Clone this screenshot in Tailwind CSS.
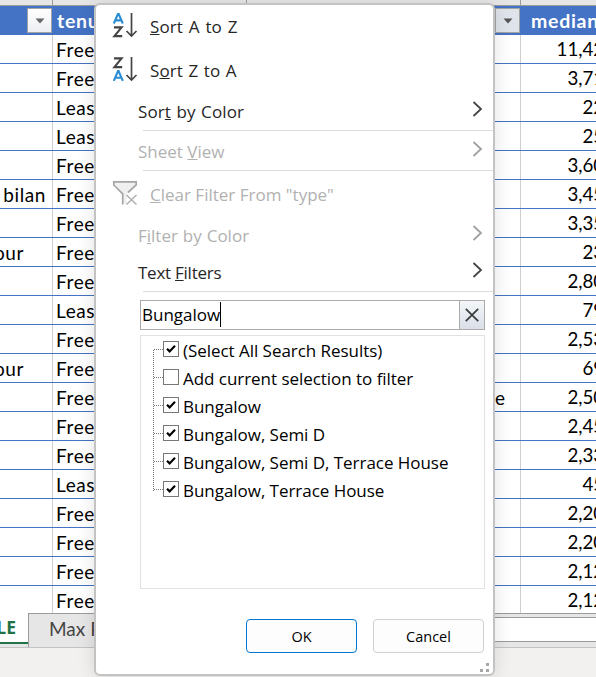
<!DOCTYPE html>
<html lang="en">
<head>
<meta charset="utf-8">
<title>Filter menu</title>
<script src="https://cdn.jsdelivr.net/npm/@tailwindcss/browser@4"></script>
</head>
<body class="w-[596px] h-[677px] overflow-hidden bg-[#f2f1f0]">
<div class="relative w-[596px] h-[677px] overflow-hidden flex flex-col font-['Lato',sans-serif] text-black">
  <!-- column heading strip -->
  <div class="h-[6px] shrink-0 flex bg-[#e6e6e6] border-b border-[#9b9b9b]">
    <div class="w-[53px] border-r border-[#9b9b9b]"></div>
    <div class="w-[194px] border-r border-[#9b9b9b]"></div>
    <div class="w-[274px] border-r border-[#9b9b9b]"></div>
  </div>
  <!-- table header -->
  <div class="h-[29px] shrink-0 flex items-center bg-[#4472c4] text-white font-bold text-[19.5px] tracking-[0.7px] whitespace-nowrap">
    <div class="w-[52px] shrink-0 flex justify-end"><div class="w-[25px] h-[25px] border border-[#a3a3a3] bg-linear-to-b from-white to-[#eceff3] flex items-center justify-center"><svg width="10" height="6"><path d="M0.5 0.5H9.5L5 5.5Z" fill="#666"/></svg></div></div>
    <div class="w-[443px] shrink-0 pl-[5px]">tenure</div>
    <div class="w-[25px] h-[25px] shrink-0 border border-[#a3a3a3] bg-[#dfe3ea] flex items-center justify-center"><svg width="10" height="6"><path d="M0.5 0.5H9.5L5 5.5Z" fill="#555"/></svg></div>
    <div class="pl-[11px]">median</div>
  </div>
  <!-- table body -->
  <div id="rows" class="h-[578px] shrink-0 overflow-hidden bg-white"></div>
  <!-- sheet tabs -->
  <div class="h-[35px] shrink-0 flex bg-[#e6e6e6] border-b border-[#c3c3c3] whitespace-nowrap text-[19px]">
    <div class="w-[29px] shrink-0 h-[31px] bg-white border-b-2 border-[#217346] text-[#217346] font-['Open_Sans',sans-serif] font-bold text-[17.5px] flex justify-end items-center pr-[13px] pb-px"><span>TABLE</span></div>
    <div class="w-[466px] shrink-0 h-[34px] -ml-px border-l border-t border-[#9b9b9b] pl-[20px] pt-px text-[#444]">Max Price</div>
    <div class="flex-1 border-t border-[#9b9b9b] pt-[3px]"><div class="h-[25px] bg-white border-y border-[#9b9b9b]"></div></div>
  </div>

  <!-- filter menu -->
  <div class="absolute left-[94px] top-[3px] w-[401px] h-[673px] rounded-[6px] border-2 border-[#c3c3c3] bg-white shadow-[0_2px_18px_rgba(0,0,0,0.12)] flex flex-col font-['Open_Sans',sans-serif] text-[17px] text-[#262626] whitespace-nowrap">
    <div class="h-[44px] flex items-center pl-[16px]">
      <svg class="w-[26px] h-[26px] mr-[12px] mb-[2px]" viewBox="0 0 26 26" fill="none" stroke-width="2.1"><path d="M1.8 10.5L6 0.8H6.6L10.8 10.5M3.2 7.4H9.4" stroke="#2a8dd4"/><path d="M2 14.4H9.6L2.4 23.1H10.2" stroke="#444"/><path d="M19.5 0V23M14.5 18L19.5 23L24.5 18" stroke="#444" stroke-width="1.7"/></svg>
      <span class="tracking-[0.1px] [word-spacing:1.3px]"><u>S</u>ort A to Z</span>
    </div>
    <div class="h-[44px] flex items-center pl-[16px]">
      <svg class="w-[26px] h-[26px] mr-[12px] mb-[2px]" viewBox="0 0 26 26" fill="none" stroke-width="2.1"><path d="M2 1.4H9.6L2.4 10.1H10.2" stroke="#444"/><path d="M1.8 23.8L6 14.1H6.6L10.8 23.8M3.2 20.7H9.4" stroke="#2a8dd4"/><path d="M19.5 0V23M14.5 18L19.5 23L24.5 18" stroke="#444" stroke-width="1.7"/></svg>
      <span class="tracking-[0.1px] [word-spacing:1px]">S<u>o</u>rt Z to A</span>
    </div>
    <div class="h-[37px] flex items-center justify-between pl-[42px] pr-[10px]"><span class="tracking-[0.1px] [word-spacing:1px]">Sor<u>t</u> by Color</span><svg class="mb-[5px]" width="11" height="16" fill="none" stroke="#444" stroke-width="1.8"><path d="M1.5 1L9 8L1.5 15"/></svg></div>
    <div class="h-px ml-[47px] bg-[#dcdcdc]"></div>
    <div class="h-[39px] flex items-center justify-between pl-[42px] pr-[10px] pt-[2px] text-[#b1b1b1]"><span>Sheet <u>V</u>iew</span><svg class="mb-[6px]" width="11" height="16" fill="none" stroke="#a0a0a0" stroke-width="1.8"><path d="M1.5 1L9 8L1.5 15"/></svg></div>
    <div class="h-px ml-[47px] bg-[#dcdcdc]"></div>
    <div class="h-[46px] flex items-center pl-[16px] pt-[2px] text-[#b1b1b1]">
      <svg class="w-[26px] h-[26px] mr-[12px] mb-[4px]" viewBox="0 0 26 26" fill="none"><path d="M1.8 2H24.2V4.5L14.5 13.5V24H11V13.5L1.8 4.5Z" fill="#f0f0f0"/><path d="M10.7 24.5V13.8L1.8 5V1.9H24.2V5L16 12.5" stroke="#a6a6a6" stroke-width="1.7"/><path d="M14.5 15L24.5 24.5M24.5 15L14.5 24.5" stroke="#b1b1b1" stroke-width="1.6"/></svg>
      <span><u>C</u>lear Filter From "type"</span>
    </div>
    <div class="h-[37px] flex items-center justify-between pl-[42px] pr-[10px] text-[#b1b1b1]"><span class="[word-spacing:0.5px]">F<u>i</u>lter by Color</span><svg class="mb-[5px]" width="11" height="16" fill="none" stroke="#a0a0a0" stroke-width="1.8"><path d="M1.5 1L9 8L1.5 15"/></svg></div>
    <div class="h-[37px] flex items-center justify-between pl-[42px] pr-[10px]"><span class="tracking-[-0.25px]">Text <u>F</u>ilters</span><svg class="mb-[5px]" width="11" height="16" fill="none" stroke="#444" stroke-width="1.8"><path d="M1.5 1L9 8L1.5 15"/></svg></div>
    <div class="h-px ml-[47px] bg-[#dcdcdc]"></div>
    <div class="mt-[8px] ml-[44px] w-[345px] h-[30px] border border-[#ababab] flex text-black">
      <div class="flex-1 flex items-center pl-px"><span>Bungalow</span><span class="w-px h-[25px] bg-black mb-[2px]"></span></div>
      <div class="w-[25px] border-l border-[#ababab] bg-linear-to-b from-[#f4f6f9] to-[#dadfe8] flex items-center justify-center"><svg width="14" height="14" fill="none" stroke="#3b3b3b" stroke-width="1.7"><path d="M0.8 0.8L13.2 13.2M13.2 0.8L0.8 13.2"/></svg></div>
    </div>
    <div class="mt-[5px] ml-[44px] w-[345px] h-[254px] border border-[#e2e2e2] relative text-black">
      <div class="absolute left-[12px] top-[14px] h-[141px] border-l border-dotted border-[#777]"></div>
      <div id="items"></div>
    </div>
    <div class="mt-[30px] ml-[150px] flex gap-[16px] text-[14.5px] text-black">
      <div class="w-[111px] h-[34px] rounded-[4px] border border-[#0078d4] bg-[#fdfdfd] flex items-center justify-center pt-px">OK</div>
      <div class="w-[111px] h-[34px] rounded-[4px] border border-[#d0d0d0] bg-[#fdfdfd] flex items-center justify-center pt-px">Cancel</div>
    </div>
    <svg class="absolute right-[4px] bottom-[2px]" width="9" height="9" fill="#a6a6a6"><path d="M6 0H9V3H6ZM0 6H3V9H0ZM6 6H9V9H6Z"/></svg>
  </div>
</div>
<script>
const rows=[["","Free","11,420"],["","Free","3,710"],["","Leas","220"],["","Leas","250"],["","Free","3,600"],["bilan","Free","3,450"],["","Free","3,350"],["our","Free","230"],["","Free","2,800"],["","Leas","790"],["","Free","2,530"],["our","Free","690"],["","Free","2,500","e"],["","Free","2,450"],["","Free","2,330"],["","Leas","450"],["","Free","2,200"],["","Free","2,200"],["","Free","2,120"],["","Free","2,120"]];
document.getElementById('rows').innerHTML=rows.map(r=>`<div class="h-[29px] flex border-b border-[#4472c4] text-[19px] tracking-[0.6px] leading-[29px] whitespace-nowrap"><div class="w-[53px] shrink-0 border-r border-[#cfcfcf] overflow-hidden flex justify-end ${r[0]==='our'?'pr-[28px]':'pr-[6px]'}"><span>${r[0]}</span></div><div class="w-[442px] shrink-0 pl-[3px]">${r[1]}</div><div class="w-[26px] shrink-0 border-r border-[#cfcfcf]">${r[3]||''}</div><div class="w-[94px] shrink-0 text-right text-[18.7px] tracking-normal">${r[2]}</div></div>`).join('');
const items=[["(Select All Search Results)",1],["Add current selection to filter",0],["Bungalow",1],["Bungalow, Semi D",1],["Bungalow, Semi D, Terrace House",1],["Bungalow, Terrace House",1]];
document.getElementById('items').innerHTML=items.map(i=>`<div class="h-[28px] flex items-center pl-[13px]"><span class="w-[9px] mb-px border-t border-dotted border-[#777]"></span><span class="w-[16px] h-[16px] mb-[2px] border border-[#777] flex items-center justify-center">${i[1]?'<svg width="10" height="10" fill="none" stroke="#000" stroke-width="2.2"><path d="M1 4.8L3.6 7.4L9 1.8"/></svg>':''}</span><span class="pl-[4px] pt-[2px] tracking-[-0.04px]">${i[0]}</span></div>`).join('');
</script>
</body>
</html>
